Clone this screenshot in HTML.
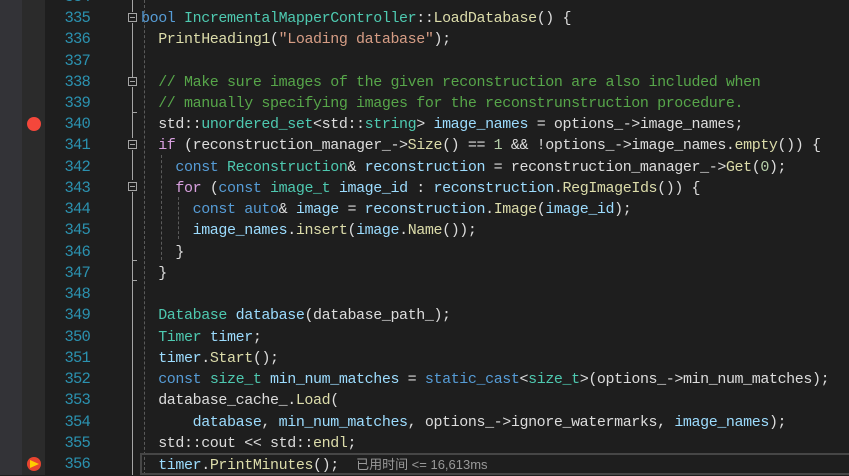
<!DOCTYPE html>
<html><head><meta charset="utf-8"><style>
body{margin:0;width:849px;height:475px;background:#1e1e1e;overflow:hidden;position:relative;font-family:"Liberation Mono","Noto Sans CJK SC",monospace}
.m1{position:absolute;left:0;top:0;width:22px;height:475px;background:#333337}
.m2{position:absolute;left:22px;top:0;width:23px;height:475px;background:#2b2b2b}
.ln{position:absolute;left:55px;width:35px;text-align:right;color:#2b91af;font-size:15.5px;letter-spacing:-0.8px;line-height:21.24px}
.c{position:absolute;left:141px;white-space:pre;font-size:15px;letter-spacing:-0.4px;line-height:21.24px;color:#dcdcdc}
.k{color:#569cd6}.t{color:#4ec9b0}.cm{color:#57a64a}.f{color:#dcdcaa}.v{color:#9cdcfe}.s{color:#d69d85}.n{color:#b5cea8}.p{color:#b4b4b4}
.fold{position:absolute;left:128px;width:9px;height:9px;border:1px solid #a5a5a5;box-sizing:border-box;background:#1e1e1e}
.fold:after{content:"";position:absolute;left:1px;top:3px;width:5px;height:1px;background:#a5a5a5}
.vl{position:absolute;left:132px;width:1px;background:#a5a5a5}
.g{position:absolute;width:0;border-left:1px dashed #5a5a5a}
</style></head><body>
<div class="m1"></div><div class="m2"></div>
<div class="vl" style="top:0;height:12px"></div>
<div class="vl" style="top:23px;height:55px"></div>
<div class="vl" style="top:87px;height:51px"></div>
<div class="vl" style="top:150px;height:30px"></div>
<div class="vl" style="top:192px;height:283px"></div>
<div style="position:absolute;left:132px;top:112px;width:5px;height:1px;background:#a5a5a5"></div>
<div style="position:absolute;left:132px;top:260px;width:5px;height:1px;background:#a5a5a5"></div>
<div style="position:absolute;left:132px;top:280px;width:5px;height:1px;background:#a5a5a5"></div>
<div class="fold" style="top:13px"></div>
<div class="fold" style="top:77px"></div>
<div class="fold" style="top:140px"></div>
<div class="fold" style="top:182px"></div>
<div class="g" style="left:144px;top:0;height:475px"></div>
<div class="g" style="left:161px;top:155px;height:105px"></div>
<div class="g" style="left:178px;top:197px;height:42px"></div>
<div style="position:absolute;left:27px;top:117px;width:14px;height:14px;border-radius:50%;background:#f4473b"></div>
<div style="position:absolute;left:27px;top:457px;width:14px;height:14px;border-radius:50%;background:#e8442f"></div>
<div style="position:absolute;left:30px;top:460px;width:0;height:0;border-top:4px solid transparent;border-bottom:4px solid transparent;border-left:9px solid #ffcc00"></div>
<div style="position:absolute;left:140px;top:453px;width:712px;height:22px;border:2px solid #464646;box-sizing:border-box"></div>
<div id="x"></div>
<script>
var L=[
['334',''],
['335','<span class="k">bool</span> <span class="t">IncrementalMapperController</span>::<span class="f">LoadDatabase</span>() {'],
['336','  <span class="f">PrintHeading1</span>(<span class="s">"Loading database"</span>);'],
['337',''],
['338','  <span class="cm">// Make sure images of the given reconstruction are also included when</span>'],
['339','  <span class="cm">// manually specifying images for the reconstrunstruction procedure.</span>'],
['340','  std::<span class="t">unordered_set</span>&lt;std::<span class="t">string</span>&gt; <span class="v">image_names</span> = options_-&gt;image_names;'],
['341','  <span class="k" style="color:#d8a0df">if</span> (reconstruction_manager_-&gt;<span class="f">Size</span>() == <span class="n">1</span> &amp;&amp; !options_-&gt;image_names.<span class="f">empty</span>()) {'],
['342','    <span class="k">const</span> <span class="t">Reconstruction</span>&amp; <span class="v">reconstruction</span> = reconstruction_manager_-&gt;<span class="f">Get</span>(<span class="n">0</span>);'],
['343','    <span style="color:#d8a0df">for</span> (<span class="k">const</span> <span class="t">image_t</span> <span class="v">image_id</span> : <span class="v">reconstruction</span>.<span class="f">RegImageIds</span>()) {'],
['344','      <span class="k">const</span> <span class="k">auto</span>&amp; <span class="v">image</span> = <span class="v">reconstruction</span>.<span class="f">Image</span>(<span class="v">image_id</span>);'],
['345','      <span class="v">image_names</span>.<span class="f">insert</span>(<span class="v">image</span>.<span class="f">Name</span>());'],
['346','    }'],
['347','  }'],
['348',''],
['349','  <span class="t">Database</span> <span class="v">database</span>(database_path_);'],
['350','  <span class="t">Timer</span> <span class="v">timer</span>;'],
['351','  <span class="v">timer</span>.<span class="f">Start</span>();'],
['352','  <span class="k">const</span> <span class="t">size_t</span> <span class="v">min_num_matches</span> = <span class="k">static_cast</span>&lt;<span class="t">size_t</span>&gt;(options_-&gt;min_num_matches);'],
['353','  database_cache_.<span class="f">Load</span>('],
['354','      <span class="v">database</span>, <span class="v">min_num_matches</span>, options_-&gt;ignore_watermarks, <span class="v">image_names</span>);'],
['355','  std::cout &lt;&lt; std::<span class="f">endl</span>;'],
['356','  <span class="v">timer</span>.<span class="f">PrintMinutes</span>();  <span style="color:#999;letter-spacing:0;font-family:\'Liberation Sans\',\'Noto Sans CJK SC\',sans-serif;font-size:13px">已用时间 &lt;= 16,613ms</span>']
];
var h='';L.forEach(function(l,i){var t=(-13.2+i*21.24).toFixed(2);
h+='<div class="ln" style="top:'+t+'px">'+l[0]+'</div><div class="c" style="top:'+t+'px">'+l[1]+'</div>';});
document.getElementById('x').innerHTML=h;
</script>
</body></html>
